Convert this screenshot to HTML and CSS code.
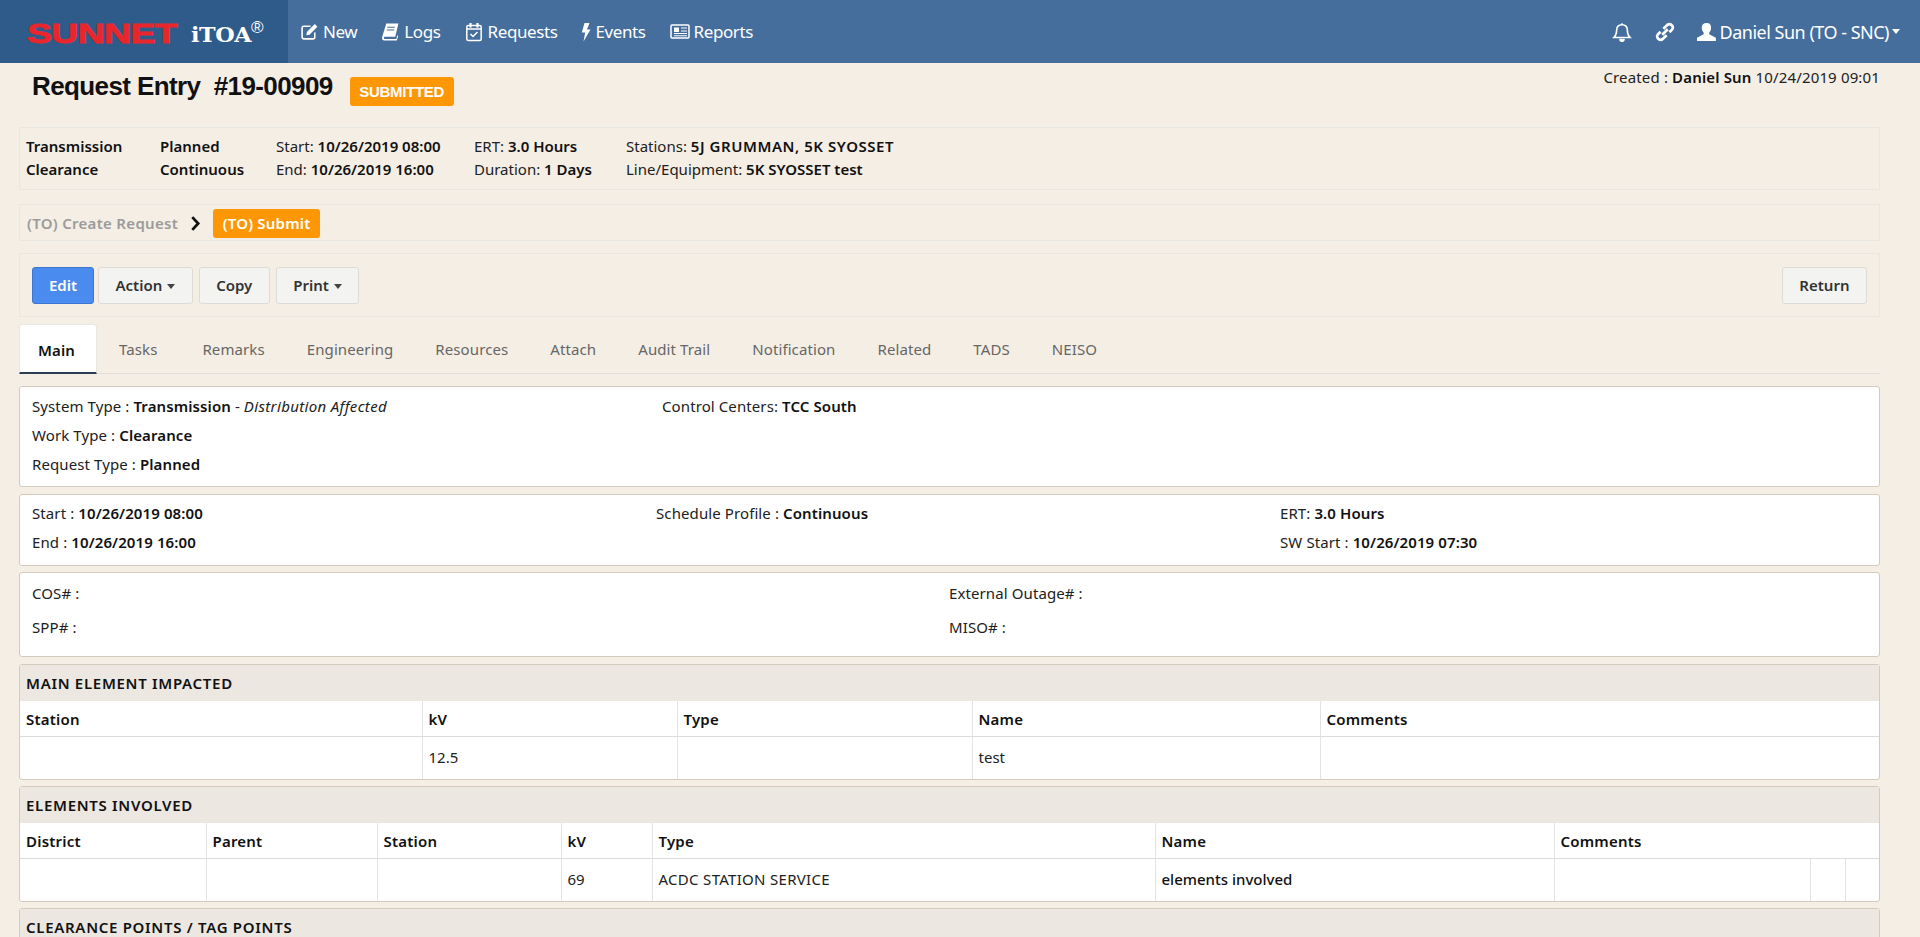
FILE: index.html
```html
<!DOCTYPE html>
<html lang="en">
<head>
<meta charset="utf-8">
<title>Request Entry #19-00909</title>
<link rel="stylesheet" href="styles.css">
</head>
<body>
<header class="navbar">
  <a class="brand">
    <svg width="288" height="63" viewBox="0 0 288 63">
      <text x="27" y="43" class="logo-red" textLength="150" lengthAdjust="spacingAndGlyphs">SUNNET</text>
      <text x="191" y="42" class="logo-white" textLength="60" lengthAdjust="spacingAndGlyphs">iTOA</text>
      <text x="251" y="33" class="logo-reg">®</text>
    </svg>
  </a>
  <nav class="nav-main">
    <a class="nav-link"><svg class="ico" viewBox="0 0 18 18"><path d="M14 10v4.500a1.500 1.500 0 0 1-1.500 1.500h-9A1.500 1.500 0 0 1 2 14.500v-9A1.500 1.500 0 0 1 3.500 4H10" fill="none" stroke="#fff" stroke-width="1.500"/><path d="M6.500 9.500 14 2l2.500 2.500L9 12l-3 .5z" fill="#fff"/></svg>New</a>
    <a class="nav-link"><svg class="ico" viewBox="0 0 18 18"><path d="M5 1.500h11.500l-3 12.500H3.500c-1 0-1 2 0 2h11l1-3.500.8.700L15 17.500H3C.8 17.500.8 15 1.300 13.500z" fill="#fff"/><path d="M6 5h7M5.500 7.500h7" stroke="#456e9c" stroke-width="1"/></svg>Logs</a>
    <a class="nav-link"><svg class="ico ico-cal" viewBox="0 0 18 20"><rect x="1.800" y="3.500" width="14.400" height="15" rx="1.500" fill="none" stroke="#fff" stroke-width="1.500"/><path d="M2 7h14" stroke="#fff" stroke-width="1.500"/><path d="M5.500 1v4.500M12.500 1v4.500" stroke="#fff" stroke-width="2.200"/><path d="m5.500 12 2.500 2.500 4.500-4.500" fill="none" stroke="#fff" stroke-width="1.500"/></svg>Requests</a>
    <a class="nav-link"><svg class="ico ico-bolt" viewBox="0 0 10 20"><path d="M3.500 1h5L6 7.500h3.500L2.500 19.500 4.200 10.500H.8z" fill="#fff"/></svg>Events</a>
    <a class="nav-link"><svg class="ico ico-news" viewBox="0 0 20 18"><rect x="1" y="2.500" width="18" height="13" rx="1" fill="none" stroke="#fff" stroke-width="1.500"/><rect x="4" y="5" width="5" height="4.500" fill="#fff"/><path d="M11 5.500h6M11 8.500h6M4 11h13M4 13.300h13" stroke="#fff" stroke-width="1"/></svg>Reports</a>
  </nav>
  <div class="nav-right">
    <svg class="ico-bell" viewBox="0 0 18 18"><path d="M9 2.500c-3 0-4.800 2-4.800 5 0 3.500-1 5-2.500 6.500h14.600c-1.500-1.500-2.500-3-2.500-6.500 0-3-1.800-5-4.800-5z" fill="none" stroke="#fff" stroke-width="1.400"/><path d="M9 .8v2M7 15.500a2 2 0 0 0 4 0z" stroke="#fff" fill="#fff" stroke-width="1"/></svg>
    <svg class="ico-link" viewBox="0 0 18 18"><path d="M7.500 6 11 2.700a2.600 2.600 0 0 1 3.800 0l.5.500a2.600 2.600 0 0 1 0 3.700L13 9.200M5 8.800 2.700 11a2.600 2.600 0 0 0 0 3.800l.5.500a2.600 2.600 0 0 0 3.700 0L10.500 12M6.500 11.500 11.500 6.500" fill="none" stroke="#fff" stroke-width="2.400"/></svg>
    <a class="user"><svg class="ico-user" viewBox="0 0 18 18"><path d="M9 1c2.300 0 3.700 1.800 3.700 4.200 0 1.800-.8 3.500-1.700 4.300v1.500l6 3.200V17H0v-2.800l6-3.200V9.500C5.100 8.700 4.300 7 4.300 5.200 4.300 2.800 5.700 1 9 1z" fill="#fff"/></svg><span class="user-name">Daniel Sun (TO - SNC)</span><span class="caret caret-white"></span></a>
  </div>
</header>

<main class="page">
  <div class="title-row">
    <h1 class="title">Request Entry&nbsp;&nbsp;#19-00909</h1>
    <span class="status">SUBMITTED</span>
    <div class="created">Created : <b>Daniel Sun</b> 10/24/2019 09:01</div>
  </div>

  <section class="well summary">
    <div class="sum-col sum-1"><b>Transmission</b><b>Clearance</b></div>
    <div class="sum-col sum-2"><b>Planned</b><b>Continuous</b></div>
    <div class="sum-col sum-3"><span>Start: <b>10/26/2019 08:00</b></span><span>End: <b>10/26/2019 16:00</b></span></div>
    <div class="sum-col sum-4"><span>ERT: <b>3.0 Hours</b></span><span>Duration: <b>1 Days</b></span></div>
    <div class="sum-col"><span>Stations: <b class="caps">5J GRUMMAN, 5K SYOSSET</b></span><span>Line/Equipment: <b>5K SYOSSET test</b></span></div>
  </section>

  <section class="well steps">
    <b class="step-done">(TO) Create Request</b>
    <svg class="chev" viewBox="0 0 10 14"><path d="M2 1l5.500 6L2 13" fill="none" stroke="#111" stroke-width="2.600"/></svg>
    <span class="step-now">(TO) Submit</span>
  </section>

  <section class="well toolbar">
    <button class="btn btn-primary">Edit</button>
    <button class="btn">Action <span class="caret"></span></button>
    <button class="btn">Copy</button>
    <button class="btn">Print <span class="caret"></span></button>
    <button class="btn btn-return">Return</button>
  </section>

  <ul class="tabs">
    <li class="tab tab-active">Main</li>
    <li class="tab tab-tasks">Tasks</li>
    <li class="tab">Remarks</li>
    <li class="tab">Engineering</li>
    <li class="tab">Resources</li>
    <li class="tab">Attach</li>
    <li class="tab">Audit Trail</li>
    <li class="tab">Notification</li>
    <li class="tab">Related</li>
    <li class="tab">TADS</li>
    <li class="tab">NEISO</li>
  </ul>

  <section class="panel info info-1">
    <div class="info-col c1">
      <p>System Type : <b>Transmission</b> - <i class="note">Distribution Affected</i></p>
      <p>Work Type : <b>Clearance</b></p>
      <p>Request Type : <b>Planned</b></p>
    </div>
    <div class="info-col"><p>Control Centers: <b>TCC South</b></p></div>
  </section>

  <section class="panel info info-2">
    <div class="info-col c2a">
      <p>Start : <b>10/26/2019 08:00</b></p>
      <p>End : <b>10/26/2019 16:00</b></p>
    </div>
    <div class="info-col c2b"><p>Schedule Profile : <b>Continuous</b></p></div>
    <div class="info-col">
      <p>ERT: <b>3.0 Hours</b></p>
      <p>SW Start : <b>10/26/2019 07:30</b></p>
    </div>
  </section>

  <section class="panel info info-3">
    <div class="info-col c3a"><p>COS# :</p><p>SPP# :</p></div>
    <div class="info-col"><p>External Outage# :</p><p>MISO# :</p></div>
  </section>

  <section class="panel grid-panel">
    <h2 class="panel-head">MAIN ELEMENT IMPACTED</h2>
    <table class="data t-main">
      <colgroup><col class="m1"><col class="m2"><col class="m3"><col class="m4"><col></colgroup>
      <thead><tr><th>Station</th><th>kV</th><th>Type</th><th>Name</th><th>Comments</th></tr></thead>
      <tbody><tr><td></td><td>12.5</td><td></td><td>test</td><td></td></tr></tbody>
    </table>
  </section>

  <section class="panel grid-panel">
    <h2 class="panel-head">ELEMENTS INVOLVED</h2>
    <table class="data t-el">
      <colgroup><col class="e1"><col class="e2"><col class="e3"><col class="e4"><col class="e5"><col class="e6"><col class="e7"><col class="e8"><col></colgroup>
      <thead><tr><th>District</th><th>Parent</th><th>Station</th><th>kV</th><th>Type</th><th>Name</th><th colspan="3">Comments</th></tr></thead>
      <tbody><tr><td></td><td></td><td></td><td>69</td><td class="upper">ACDC STATION SERVICE</td><td class="semi">elements involved</td><td></td><td></td><td></td></tr></tbody>
    </table>
  </section>

  <section class="panel grid-panel">
    <h2 class="panel-head">CLEARANCE POINTS / TAG POINTS</h2>
  </section>
</main>
</body>
</html>
```

FILE: styles.css
```css
* { box-sizing: border-box; }
html, body { height: 100%; }
body {
  margin: 0;
  height: 937px;
  overflow: hidden;
  background: #f5eee5;
  color: #212121;
  font-family: "Noto Sans", "Open Sans", sans-serif;
  font-size: 15px;
  line-height: 20px;
}
b { font-weight: 600; color: #111; }
p { margin: 0; }
.caps { letter-spacing: 0.55px; }
.note { letter-spacing: 0.35px; }
.upper { letter-spacing: 0.3px; }

.navbar { display: flex; align-items: center; height: 63px; background: #456e9c; color: #fff; font-size: 17px; letter-spacing: -0.4px; }
.brand { display: block; width: 288px; height: 63px; background: #2f5b8b; flex: none; }
.brand svg { display: block; }
.logo-red { font: 700 27px "Liberation Sans", sans-serif; fill: #e8262b; stroke: #e8262b; stroke-width: 0.9px; }
.logo-white { font: 700 21px "DejaVu Serif", serif; fill: #fff; }
.logo-reg { font: 400 17px "Liberation Sans", sans-serif; fill: #fff; }

.nav-main { display: flex; padding-left: 12px; }
.nav-link { display: flex; align-items: center; margin-right: 24px; }
.ico { width: 19px; height: 19px; margin-right: 4px; }
.ico-cal { width: 18px; height: 20px; margin-right: 5px; }
.ico-bolt { width: 10px; height: 20px; }
.ico-news { width: 20px; }

.nav-right { display: flex; align-items: center; margin-left: auto; padding-right: 20px; }
.ico-bell { width: 20px; height: 20px; margin-right: 23px; }
.ico-link { width: 20px; height: 20px; margin-right: 22px; }
.ico-user { width: 20px; height: 20px; margin-right: 3px; }
.user { display: flex; align-items: center; }
.user-name { font-size: 18px; letter-spacing: -0.5px; }

.caret { display: inline-block; width: 0; height: 0; margin-left: 1px; vertical-align: middle; border-top: 5px solid #444; border-left: 4.5px solid transparent; border-right: 4.5px solid transparent; }
.caret-white { margin-left: 3px; border-top-color: #fff; }

.page { padding: 0 40px 0 19px; }

.title-row { display: flex; align-items: flex-start; height: 64px; padding: 5px 0 0 13px; }
.title { margin: 0; font: 700 26px/36px "Liberation Sans", sans-serif; letter-spacing: -0.6px; color: #111; }
.status { margin: 9px 0 0 17px; width: 104px; height: 29px; border-radius: 3px; background: #fd9706; color: #fff; font: 700 15px/29px "Liberation Sans", sans-serif; letter-spacing: -0.3px; text-align: center; }
.created { margin-left: auto; margin-top: -1px; letter-spacing: 0.15px; }

.well { display: flex; align-items: center; background: #f5eee5; border: 1px solid #e9e7e2; }
.summary { height: 63px; padding: 0 0 2px 6px; line-height: 23px; }
.sum-col { display: flex; flex-direction: column; }
.sum-1 { width: 134px; }
.sum-2 { width: 116px; }
.sum-3 { width: 198px; }
.sum-4 { width: 152px; }

.steps { height: 37px; margin-top: 14px; padding: 1px 0 0 7px; }
.step-done { color: #9b9b9b; letter-spacing: 0.3px; }
.chev { width: 11px; height: 15px; margin: 0 12px 0 12px; }
.step-now { display: block; width: 107px; height: 29px; border-radius: 3px; background: #fd9706; color: #fff; font-weight: 600; line-height: 29px; text-align: center; letter-spacing: 0.2px; }

.toolbar { height: 64px; margin-top: 12px; padding: 0 12px; gap: 6px; }
.btn { height: 37px; padding: 0 16.5px; border: 1px solid #dedbd6; border-radius: 3px; background: #f3f3f1; color: #333; font: 600 15px "Noto Sans", sans-serif; }
.btn-primary { width: 62px; margin-right: -2px; padding: 0; background: #4a8bf0; border-color: #3d76cf; color: #fff; }
.btn-return { margin-left: auto; }

.tabs { display: flex; height: 50px; margin: 7px 0 0; padding: 0; list-style: none; border-bottom: 1px solid #dfdfdf; }
.tab { height: 49px; padding: 0 19px; margin-right: 4px; line-height: 50px; letter-spacing: 0.1px; color: #666; }
.tab-tasks { margin-right: 7px; }
.tab-active { width: 78px; margin-right: 3px; background: #fff; color: #111; font-weight: 600; border: 1px solid #e9e7e2; border-bottom: 2px solid #2c3e50; border-radius: 3px 3px 0 0; height: 50px; padding: 0 18px; }

.panel { background: #fff; border: 1px solid #d3cbbb; border-radius: 3px; margin-top: 6px; }
.info { display: flex; padding-left: 12px; line-height: 29px; letter-spacing: 0.1px; }
.info-1 { height: 101px; margin-top: 12px; padding-top: 5px; }
.info-2 { height: 72px; margin-top: 7px; padding-top: 4px; }
.info-3 { height: 85px; padding-top: 3px; line-height: 34px; }
.c1 { width: 630px; }
.c2a { width: 624px; }
.c2b { width: 624px; }
.c3a { width: 917px; }

.info-3 + .grid-panel { margin-top: 7px; }
.panel-head { margin: 0; height: 36px; padding-left: 6px; background: #ece7e0; font-size: 15px; font-weight: 600; line-height: 37px; letter-spacing: 0.7px; color: #111; }
.data { width: 100%; border-collapse: collapse; table-layout: fixed; }
.data th, .data td { padding: 0 6px; border-left: 1px solid #e3e3e3; text-align: left; }
.data th:first-child, .data td:first-child { border-left: 0; }
.data th { height: 35px; padding-top: 2px; font-weight: 600; letter-spacing: 0.2px; color: #111; border-bottom: 1px solid #dcdcdc; }
.data td { height: 43px; padding-bottom: 2px; }
.data .semi { font-weight: 500; color: #111; }
.m1 { width: 402px; }
.m2 { width: 255px; }
.m3 { width: 295px; }
.m4 { width: 348px; }
.e1 { width: 186px; }
.e2 { width: 171px; }
.e3 { width: 184px; }
.e4 { width: 91px; }
.e5 { width: 503px; }
.e6 { width: 399px; }
.e7 { width: 256px; }
.e8 { width: 35px; }
```
